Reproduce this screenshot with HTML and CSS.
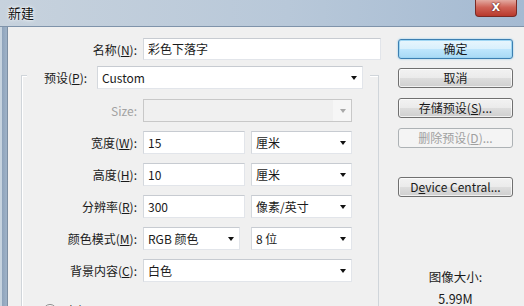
FILE: index.html
```html
<!DOCTYPE html>
<html lang="zh-CN">
  <head>
    <meta charset="utf-8" />
    <title>新建</title>
    <link rel="stylesheet" href="styles.css">
  </head>
  <body>
    <div class="window">
      <div class="titlebar">
        <span class="title">新建</span>
        <div class="close">X</div>
      </div>
      <div class="frame">
        <div class="frame-left"></div>
        <div class="client">
          <div class="form">
            <div class="row name-row">
              <label>名称(<u>N</u>):</label>
              <div class="field">彩色下落字</div>
            </div>

            <div class="group">
              <div class="group-head">
                <label>预设(<u>P</u>):</label>
                <div class="field select preset"><span>Custom</span><i class="arrow"></i></div>
              </div>

              <div class="row first">
                <label class="disabled">Size:</label>
                <div class="field select off wide"><span></span><i class="arrow"></i></div>
              </div>
              <div class="row">
                <label>宽度(<u>W</u>):</label>
                <div class="pair">
                  <div class="field num">15</div>
                  <div class="field select unit"><span>厘米</span><i class="arrow"></i></div>
                </div>
              </div>
              <div class="row">
                <label>高度(<u>H</u>):</label>
                <div class="pair">
                  <div class="field num">10</div>
                  <div class="field select unit"><span>厘米</span><i class="arrow"></i></div>
                </div>
              </div>
              <div class="row">
                <label>分辨率(<u>R</u>):</label>
                <div class="pair">
                  <div class="field num">300</div>
                  <div class="field select unit"><span>像素/英寸</span><i class="arrow"></i></div>
                </div>
              </div>
              <div class="row">
                <label>颜色模式(<u>M</u>):</label>
                <div class="pair">
                  <div class="field select mode"><span>RGB 颜色</span><i class="arrow"></i></div>
                  <div class="field select unit"><span>8 位</span><i class="arrow"></i></div>
                </div>
              </div>
              <div class="row">
                <label>背景内容(<u>C</u>):</label>
                <div class="field select wide"><span>白色</span><i class="arrow"></i></div>
              </div>

              <div class="advanced">
                <span class="toggle"></span>
                <span>高级</span>
              </div>
            </div>
          </div>

          <div class="side">
            <div class="btn default">确定</div>
            <div class="btn">取消</div>
            <div class="btn">存储预设(<u>S</u>)...</div>
            <div class="btn disabled">删除预设(<u>D</u>)...</div>
            <div class="btn central">D<u>e</u>vice Central...</div>
            <div class="size-info">
              <div>图像大小:</div>
              <div class="size-value">5.99M</div>
            </div>
          </div>
        </div>
      </div>
    </div>
  </body>
</html>
```

FILE: styles.css
```css
body {
  margin: 0;
  font-family: "Noto Sans CJK SC", "Liberation Sans", sans-serif;
  font-size: 12px;
  color: #1a1a1a;
  background: #f0f0f0;
  overflow: hidden;
}

.window {
  width: 524px;
  height: 306px;
  display: flex;
  flex-direction: column;
  overflow: hidden;
}

/* title bar, win7 basic look */
.titlebar {
  height: 26px;
  flex: none;
  display: flex;
  justify-content: space-between;
  align-items: flex-start;
  background: linear-gradient(to right, #c7d2dd 0%, #b8c8d9 55%, #a4bad2 100%);
  border-bottom: 1px solid #7f93aa;
}
.title {
  margin: 5px 0 0 8px;
  font-size: 13px;
  line-height: 16px;
  color: #111;
  text-shadow: 0 0 4px #fff, 0 0 2px #fff;
}
.close {
  width: 40px;
  height: 16px;
  margin-right: 7px;
  border: 1px solid #7a2a24;
  border-top: 0;
  border-radius: 0 0 4px 4px;
  background: linear-gradient(#e3aaa1, #cf6357 45%, #b8392c);
  color: #fff;
  font-family: "DejaVu Sans", sans-serif;
  font-weight: bold;
  font-size: 11px;
  line-height: 15px;
  text-align: center;
  text-shadow: 0 0 2px #5a1a14, 0 0 1px #5a1a14;
}

.frame {
  flex: 1;
  display: flex;
}
.frame-left {
  width: 7px;
  flex: none;
  background: linear-gradient(to right, #c6d3df 0, #c6d3df 2px, #8ea3bb 2px, #9cb0c6 6px);
  border-right: 1px solid #7d8fa3;
}
.client {
  flex: 1;
  display: flex;
  padding-top: 11px;
  background: #f0f0f0;
}

/* left part: fields */
.form {
  width: 373px;
  flex: none;
}
.row {
  display: grid;
  grid-template-columns: 115px auto;
  column-gap: 6px;
  align-items: center;
  margin-top: 9px;
}
.row.first {
  margin-top: 10px;
}
.name-row {
  grid-template-columns: 129px 238px;
  margin-top: 0;
}
label {
  text-align: right;
  white-space: nowrap;
}
label.disabled {
  color: #a2a2a2;
}

.field {
  height: 23px;
  box-sizing: border-box;
  padding: 0 4px;
  background: #fff;
  border: 1px solid #e2e5ea;
  border-top-color: #c7cbd1;
  border-left-color: #d4d8dd;
  line-height: 21px;
  white-space: nowrap;
}
.name-row .field {
  height: 22px;
  line-height: 20px;
}
.select {
  display: flex;
  justify-content: space-between;
  align-items: center;
  padding-right: 5px;
}
.arrow {
  width: 0;
  height: 0;
  border-left: 3.5px solid transparent;
  border-right: 3.5px solid transparent;
  border-top: 4px solid #111;
}
.select.off {
  background: linear-gradient(to right, #f0f0f0 189px, #f6f6f6 189px);
  border-color: #c8c8c8;
}
.select.off .arrow {
  border-top-color: #a8a8a8;
}

.pair {
  display: flex;
  gap: 6px;
}
.num {
  width: 102px;
}
.unit {
  width: 101px;
}
.mode {
  width: 97px;
  margin-right: 5px;
}
.wide {
  width: 209px;
}

/* group box with preset as its caption */
.group {
  width: 358px;
  box-sizing: border-box;
  margin: 15px 0 0 13px;
  height: 240px;
  border: 1px solid #d0d5da;
  border-bottom: 0;
  box-shadow: inset 1px 1px 0 #fff;
}
.group-head {
  display: flex;
  align-items: center;
  width: fit-content;
  margin: -10px 0 0 5px;
  padding: 0 7px 0 17px;
  background: #f0f0f0;
}
.group-head label {
  width: 46px;
  text-align: left;
  margin-right: 7px;
}
.preset {
  width: 266px;
}

.advanced {
  display: flex;
  align-items: center;
  gap: 8px;
  margin: 20px 0 0 21px;
}
.toggle {
  width: 12px;
  height: 12px;
  border: 1px solid #8a8a8a;
  border-radius: 50%;
  background: linear-gradient(#fdfdfd, #e4e4e4);
}

/* right part: buttons */
.side {
  width: 115px;
  margin-left: 17px;
  padding-top: 1px;
}
.btn {
  height: 20px;
  box-sizing: border-box;
  margin-bottom: 10px;
  border: 1px solid #707070;
  border-radius: 3px;
  background: linear-gradient(#f2f2f2 0%, #ebebeb 48%, #dddddd 52%, #cfcfcf 100%);
  box-shadow: inset 0 0 0 1px rgba(255, 255, 255, 0.7);
  text-align: center;
  line-height: 18px;
  white-space: nowrap;
}
.btn.default {
  margin-bottom: 9px;
  border-color: #3c7fb1;
  background: linear-gradient(#e8f6fd 0%, #d9f0fc 48%, #bee6fd 52%, #a7d9f5 100%);
  box-shadow: inset 0 0 0 1px #9fd6f3, 0 0 2px #7ec4ea;
}
.btn.disabled {
  color: #a0a0a0;
  border-color: #adb2b5;
  background: #f4f4f4;
  box-shadow: none;
  margin-bottom: 29px;
}
.size-info {
  margin-top: 71px;
  text-align: center;
  line-height: 17px;
  font-size: 12.5px;
}
.size-value {
  margin-top: 5px;
}
```
